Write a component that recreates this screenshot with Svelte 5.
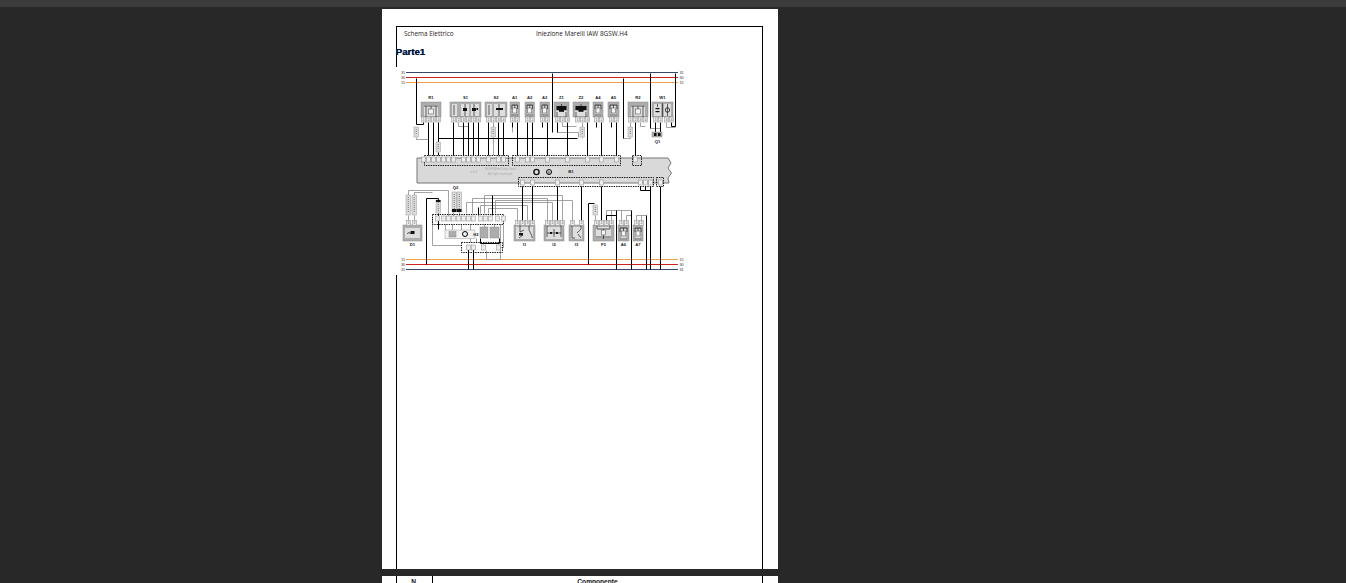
<script>
  const rails = [
    { y: 72.5, label: '31', cls: 'blue' },
    { y: 77.5, label: '30', cls: 'red' },
    { y: 82.5, label: '15', cls: 'orange' },
    { y: 259.5, label: '15', cls: 'orange' },
    { y: 264.5, label: '30', cls: 'red' },
    { y: 269.5, label: '31', cls: 'blue' }
  ];

  function symbol(kind, x, y, w, h) {
    const c = x + w / 2;
    const b = y + h;
    if (kind === 'relay') {
      return {
        light: [[x + 3, y + 3, w - 6, h - 4]],
        solid: [],
        path: `M${x + 3} ${y + 4}H${x + w - 3}M${c} ${y + 4}V${y + 7}M${c - 5} ${y + 4}V${b}M${c + 5} ${y + 4}V${b}`,
        coil: [[c - 2.5, y + 7, 5, 5]]
      };
    }
    if (kind === 'small') {
      return {
        light: [[c - 2.5, y + 4, 5, h - 5]],
        solid: [],
        path: `M${x + 2} ${y + 3}H${x + w - 2}M${x + 2} ${y + 3}V${y + 7}M${x + w - 2} ${y + 3}V${y + 7}M${c} ${y + 3}V${y + 6}M${c - 3} ${b - 2}H${c + 3}`,
        coil: [[c - 2, y + 6, 4, 5]]
      };
    }
    if (kind === 'S1') {
      return {
        light: [[x + 2, y + 2, 5, h - 3], [x + 11, y + 2, 8, h - 3], [x + 21, y + 2, 8, h - 3]],
        solid: [[x + 13, y + 6, 4, 3], [x + 22, y + 6, 4, 3], [x + 26.5, y + 6, 1.6, 2]],
        path: `M${x + 4} ${y + 3}V${b - 2}M${x + 15} ${y + 2}V${b - 1}M${x + 24} ${y + 2}V${b - 1}`,
        coil: []
      };
    }
    if (kind === 'S2') {
      return {
        light: [[x + 2, y + 2, 5, h - 3], [x + 9, y + 2, 11, h - 3]],
        solid: [[x + 11, y + 6, 7, 2]],
        path: `M${x + 4} ${y + 3}V${b - 2}M${x + 14} ${y + 2}V${b - 1}`,
        coil: []
      };
    }
    if (kind === 'Z') {
      return {
        light: [[x + 2, y + 9, w - 4, 5]],
        solid: [[x + 2.5, y + 4, w - 5, 4], [c - 2.5, y + 8, 5, 1.8]],
        path: `M${c} ${y + 2}V${y + 4}M${x + 3} ${y + 10}V${b}M${x + w - 3} ${y + 10}V${b}`,
        coil: []
      };
    }
    if (kind === 'W1') {
      return {
        light: [[x + 2, y + 2, 7, h - 3], [x + 12, y + 2, 7, h - 3]],
        solid: [[x + 3.5, y + 6, 4, 1.2], [x + 3.5, y + 9, 4, 1.2]],
        path: `M${x + 5.5} ${y + 2}V${y + 5}M${x + 15.5} ${y + 2}V${b - 1}M${x + 10.5} ${y + 1}V${b}`,
        ring: [x + 15.5, y + 8],
        coil: []
      };
    }
    if (kind === 'D1') {
      return {
        light: [[x + 2, y + 3, w - 4, h - 6]],
        solid: [[c - 2, y + 6, 4, 3]],
        path: `M${c - 5} ${y + 9}a1.4 1.4 0 1 1 2.8 0`,
        coil: []
      };
    }
    if (kind === 'I1') {
      return {
        light: [[x + 2, y + 2, w - 4, h - 4]],
        solid: [[x + 5, y + 8, 4, 2.5]],
        path: `M${x + 6} ${y}V${y + 7}L${x + 10} ${y + 5}M${x + 5} ${b - 3}L${x + 9} ${y + 10}M${x + 15} ${y}V${y + 5}L${x + 18} ${y + 11}V${b - 3}`,
        coil: []
      };
    }
    if (kind === 'I2') {
      return {
        light: [[x + 2, y + 2, w - 4, h - 4]],
        solid: [[x + 6, y + 7, 2, 2], [x + 12, y + 7, 2, 2]],
        path: `M${x + 3} ${y}V${b - 4}M${x + w - 3} ${y}V${b - 4}M${x + 3} ${y + 8}H${x + w - 3}M${c} ${y + 4}V${y + 12}`,
        coil: []
      };
    }
    if (kind === 'I3') {
      return {
        light: [[x + 2, y + 2, w - 4, h - 4]],
        solid: [],
        path: `M${x + 3} ${y}V${b - 3}H${x + 6}M${x + 12} ${y}V${y + 4}L${x + 8} ${y + 8}M${x + 9} ${y + 9}L${x + 12} ${b - 3}`,
        coil: []
      };
    }
    return {
      light: [[x + 3, y + 2, w - 6, h - 5]],
      solid: [],
      path: `M${x + 4} ${y + 4}H${x + w - 4}M${c} ${y + 4}V${b - 4}M${x + 3} ${b - 4}H${x + w - 3}M${c} ${b - 4}V${b - 2}M${x + 4} ${y}V${y + 4}M${x + w - 4} ${y}V${y + 4}`,
      coil: [[c - 2, y + 5, 4, 5]]
    };
  }

  const top = (label, kind, x, w, pins) => ({ label, x, y: 102, w, h: 15, pins, py: 117, ly: 98.5, sym: symbol(kind, x, 102, w, 15) });
  const low = (label, kind, x, w, pins) => ({ label, x, y: 225, w, h: 16, pins, py: 220.5, ly: 245.5, sym: symbol(kind, x, 225, w, 16) });

  const boxes = [
    top('R1', 'relay', 421, 20, [423, 428, 433, 438]),
    top('S1', 'S1', 450, 31, [453, 458, 463, 468, 473, 478]),
    top('S2', 'S2', 485, 22, [488, 493, 498, 503]),
    top('A1', 'small', 510, 9.5, [512, 517]),
    top('A2', 'small', 525, 9.5, [527, 532]),
    top('A3', 'small', 540, 9.5, [542, 547]),
    top('Z1', 'Z', 554, 15, [557, 562, 567]),
    top('Z2', 'Z', 573, 16, [577, 582, 587]),
    top('A4', 'small', 593, 10, [596, 601]),
    top('A5', 'small', 608, 11, [611, 616]),
    top('R2', 'relay', 628, 20, [630, 635, 640, 645]),
    top('W1', 'W1', 652, 21, [655, 660, 666, 671]),
    low('D1', 'D1', 403, 19, [408, 414]),
    low('I1', 'I1', 514, 21, [517, 522, 527, 532]),
    low('I2', 'I2', 544, 20, [547, 552, 557, 562]),
    low('I3', 'I3', 569, 15, [572, 581]),
    low('F3', 'F3', 593, 21, [596, 601, 606, 611]),
    low('A6', 'small', 618, 11, [621, 626]),
    low('A7', 'small', 633, 10, [636, 641])
  ];

  const black = [
    'M416 78V124H423V122', 'M428 122V155', 'M433 122V155', 'M438 122V142', 'M438 152V155',
    'M438 138H577', 'M453 122V155', 'M463 122V155', 'M468 122V155', 'M473 122V155', 'M478 122V155',
    'M488 122V155', 'M498 122V155', 'M503 122V155', 'M512 122V127', 'M517 122V155',
    'M527 122V155', 'M532 122V155', 'M542 122V127', 'M547 122V155',
    'M552 73V132', 'M557 122V132', 'M567 122V155', 'M587 122V155', 'M596 122V127', 'M601 122V155',
    'M611 122V127', 'M616 122V155', 'M623 78V138', 'M635 122V155', 'M650 73V128',
    'M675 73V126H671V122', 'M655 122V132', 'M660 122V132',
    'M522 186V220', 'M532 186V220', 'M557 186V220', 'M581 186V220', 'M601 186V220',
    'M640 186V190H650', 'M645 186V190', 'M650 186V269', 'M660 186V269',
    'M588 264V203H594', 'M616 269V210', 'M631 269V210', 'M646 269V215', 'M606 220V215H616',
    'M426 264V198H438V201', 'M492 195V215', 'M478 207V215', 'M468 247V269', 'M473 247V269',
    'M438 213V229', 'M480 238V243H499V238'
  ];

  const grey = [
    'M416 137V139H428', 'M458 122V126H468', 'M493 122V127', 'M493 137V155',
    'M562 122V126H576', 'M582 122V127', 'M582 137V138', 'M557 132H578V137', 'M640 122V126H645',
    'M630 122V127', 'M623 138H630V137', 'M660 128H650', 'M666 122V127H675', 'M512 127V132',
    'M408 195V190H448V216', 'M414 195V192H432', 'M408 215V220', 'M414 215V220',
    'M453 212V216', 'M459 212V216',
    'M466 213V202H552V220', 'M472 213V198H547V220', 'M480 213V205H527V220', 'M484 213V195H562V220',
    'M488 213V208H517V220', 'M500 224V259H486V250', 'M495 213V200H572V220',
    'M432 217V245H461', 'M445 224V230', 'M452 224V230', 'M461 224V230', 'M470 224V242',
    'M484 224V230', 'M494 224V230', 'M476 238V242', 'M503 224V247H498',
    'M606 220V210H631', 'M611 220V210', 'M621 220V210', 'M626 220V215H631',
    'M636 220V215H646', 'M641 220V215', 'M595 215V220'
  ];

  const fuses = [
    [414, 127], [436, 142], [491, 127], [580, 127], [628, 127], [593, 205],
    [406, 195, 20], [412, 195, 20], [452, 192, 20], [457, 192, 20], [436, 200, 13]
  ];

  const plugs = [
    423, 428, 433, 438, 443, 448, 453, 463, 468, 473, 478, 488, 498, 503, 517, 527, 532, 547, 567, 587, 601, 616, 635
  ];
  const sockets = [522, 532, 557, 581, 601, 640, 645, 650, 660];
  const h2pins = [437, 443, 448, 453, 458, 463, 468, 473, 480, 485, 490, 497, 503];
</script>

<div class="viewer">
  <div class="toolbar"></div>
  <section class="page">
    <div class="frame">
      <div class="head">
        <span class="doc">Schema Elettrico</span>
        <span class="title">Iniezione Marelli IAW 8GSW.H4</span>
      </div>
      <h2>Parte1</h2>
      <svg class="schema" viewBox="396 67 366 208" width="366" height="208" role="img" aria-label="Schema elettrico">
        {#each rails as r}
          <line class={r.cls} x1="406" x2="678" y1={r.y} y2={r.y} />
          <text class="tiny" x="401" y={r.y + 1.5}>{r.label}</text>
          <text class="tiny" x="679.5" y={r.y + 1.5}>{r.label}</text>
        {/each}

        <polygon class="ecu" points="417,158 668,158 671,163 668,168 671.5,173 668,178 669,183 417,183" />

        <g transform="translate(0.5 0.5)">
          {#each grey as d}<path class="wire-g" {d} />{/each}
          {#each black as d}<path class="wire" {d} />{/each}
        </g>

        <rect class="dash" x="424.5" y="155.5" width="84" height="10" />
        <rect class="dash" x="512.5" y="155.5" width="108" height="10" />
        <rect class="dash" x="632.5" y="155.5" width="9" height="10" />
        <rect class="dash" x="518.5" y="177.5" width="135" height="9" />
        <rect class="dash" x="656.5" y="177.5" width="7" height="9" />

        {#each plugs as x}<rect class="pin" x={x - 1.5} y="157" width="4" height="5" />{/each}
        {#each sockets as x}<rect class="pin" x={x - 1.5} y="180" width="4" height="5" />{/each}

        {#each boxes as b}
          <rect class="box" x={b.x} y={b.y} width={b.w} height={b.h} />
          {#each b.sym.light as [x, y, w, h]}<rect class="inner" {x} {y} width={w} height={h} />{/each}
          <path class="sym" d={b.sym.path} />
          {#each b.sym.coil as [x, y, w, h]}<rect class="coil" {x} {y} width={w} height={h} />{/each}
          {#each b.sym.solid as [x, y, w, h]}<rect class="blob" {x} {y} width={w} height={h} />{/each}
          {#if b.sym.ring}<circle class="ring thin" cx={b.sym.ring[0]} cy={b.sym.ring[1]} r="2.2" />{/if}
          {#each b.pins as x, i}
            <rect class="pin" x={x - 1.5} y={b.py} width="4" height="5" />
            <text class="digit" x={x + 0.5} y={b.py + 3.7}>{i + 1}</text>
          {/each}
          <text class="tag" x={b.x + b.w / 2} y={b.ly}>{b.label}</text>
        {/each}

        {#each fuses as [x, y, h]}
          <rect class="fuse" {x} {y} width="4.5" height={h || 10} />
          <line class="fuse-core" x1={x + 2.25} x2={x + 2.25} y1={y + 2} y2={y + (h || 10) - 2} />
        {/each}
        <rect class="blob" x="436" y="200" width="4.5" height="2" />
        <rect class="blob" x="452" y="209" width="4.5" height="3" />
        <rect class="blob" x="457" y="209" width="4.5" height="3" />

        <rect class="box" x="652" y="132" width="10" height="5" />
        <rect class="blob" x="654" y="133" width="2.5" height="3" />
        <rect class="blob" x="658" y="133" width="2.5" height="3" />
        <text class="tag" x="657.5" y="142.5">Q1</text>
        <text class="tag" x="455.5" y="188.5">Q2</text>

        <rect class="dash" x="432.5" y="214.5" width="71" height="10" />
        {#each h2pins as x}<rect class="pin" x={x - 1.3} y="216" width="3.6" height="5" />{/each}
        <rect class="inner-line" x="445" y="230" width="30" height="8.5" />
        <rect class="box" x="449" y="231.5" width="7" height="5.5" />
        <circle class="wire" cx="465" cy="234" r="2.5" />
        <text class="tag" x="476" y="235.5">H2</text>
        <rect class="box" x="480" y="227" width="8" height="11" />
        <rect class="box" x="490" y="227" width="9" height="11" />
        <rect class="dash" x="461.5" y="242.5" width="41" height="10" />
        {#each [468, 473, 483, 498] as x}<rect class="pin" x={x - 1.5} y="245" width="4" height="5" />{/each}

        <rect class="inner" x="531" y="168" width="12" height="8" />
        <circle class="ring" cx="536.5" cy="172" r="2.6" />
        <rect class="inner" x="545" y="168" width="14" height="8" />
        <circle class="wire" cx="549" cy="172" r="2.5" />
        <text class="tiny" x="547.7" y="173.5">E</text>
        <text class="tag" x="571" y="172.5">B1</text>
        <text class="faint" x="485" y="170">MOH Write Data Seal</text>
        <text class="faint" x="488" y="175">All right reserved</text>
        <text class="faint" x="470" y="172.5">4 4 4</text>
      </svg>
    </div>
  </section>
  <section class="page next">
    <div class="table-head">
      <span class="n">N.</span>
      <span class="comp">Componente</span>
    </div>
  </section>
</div>

<style>
  :global(body) {
    margin: 0;
    background: #282828;
  }
  .viewer {
    height: 583px;
    overflow: hidden;
    background: #282828;
    font-family: "Open Sans", "Liberation Sans", sans-serif;
  }
  .toolbar {
    height: 7px;
    margin-bottom: 2px;
    background: #3b3b3b;
  }
  .page {
    width: 396px;
    height: 560px;
    margin: 0 0 7px 382px;
    padding: 17px 15px 0 14px;
    box-sizing: border-box;
    background: #fff;
  }
  .frame {
    height: 543px;
    box-sizing: border-box;
    border: solid #000;
    border-width: 1px 1px 0 1.5px;
    color: #222;
  }
  .head {
    display: flex;
    height: 13px;
    padding-left: 7px;
    font-size: 6.4px;
    line-height: 13px;
    white-space: nowrap;
  }
  .doc {
    width: 132px;
  }
  h2 {
    height: 27px;
    margin: 0 0 0 -1px;
    font: bold 9.6px/24px "Liberation Sans", sans-serif;
    color: #06101f;
    text-shadow: -0.4px 0 #1a4fc0;
  }
  .schema {
    display: block;
    margin-left: -1.5px;
    background: #fff;
  }
  .blue, .red, .orange {
    stroke-width: 1;
  }
  .blue { stroke: #3a4568; }
  .red { stroke: #cf1f1f; }
  .orange { stroke: #ef9f4a; }
  .tiny {
    font: 3.8px "Liberation Sans", sans-serif;
    fill: #333;
  }
  .digit {
    font: 3px "Liberation Sans", sans-serif;
    fill: #444;
    text-anchor: middle;
  }
  .tag {
    font: bold 4.2px "Liberation Sans", sans-serif;
    fill: #222;
    text-anchor: middle;
  }
  .faint {
    font: 3.2px "Liberation Sans", sans-serif;
    fill: #aaa;
  }
  .ecu {
    fill: #d9d9d9;
    stroke: #777;
    stroke-width: 1;
  }
  .dash {
    fill: none;
    stroke: #111;
    stroke-width: 1;
    stroke-dasharray: 1.4 1;
  }
  .wire {
    fill: none;
    stroke: #000;
    stroke-width: 1;
  }
  .wire-g {
    fill: none;
    stroke: #8c8c8c;
    stroke-width: 0.8;
  }
  .pin {
    fill: #eee;
    stroke: #888;
    stroke-width: 0.5;
  }
  .box {
    fill: #adadad;
    stroke: #8a8a8a;
    stroke-width: 0.5;
  }
  .inner {
    fill: #dedede;
    stroke: none;
  }
  .inner-line {
    fill: #f2f2f2;
    stroke: #999;
    stroke-width: 0.5;
  }
  .sym {
    fill: none;
    stroke: #222;
    stroke-width: 0.7;
  }
  .coil {
    fill: #f4f4f4;
    stroke: #444;
    stroke-width: 0.5;
  }
  .blob {
    fill: #111;
  }
  .ring {
    fill: none;
    stroke: #111;
    stroke-width: 1.4;
  }
  .ring.thin {
    stroke-width: 0.8;
  }
  .fuse {
    fill: #ddd;
    stroke: #999;
    stroke-width: 0.5;
  }
  .fuse-core {
    stroke: #777;
    stroke-width: 1;
    stroke-dasharray: 1 1;
  }
  .next {
    height: 40px;
    margin-bottom: 0;
    padding-top: 0;
  }
  .table-head {
    display: flex;
    height: 40px;
    border: solid #000;
    border-width: 0 1px 0 1.5px;
    font: bold 6.6px/11px "Liberation Sans", sans-serif;
    color: #111;
    text-align: center;
  }
  .n {
    width: 35px;
    height: 100%;
    border-right: 1px solid #000;
  }
  .comp {
    flex: 1;
  }
</style>
